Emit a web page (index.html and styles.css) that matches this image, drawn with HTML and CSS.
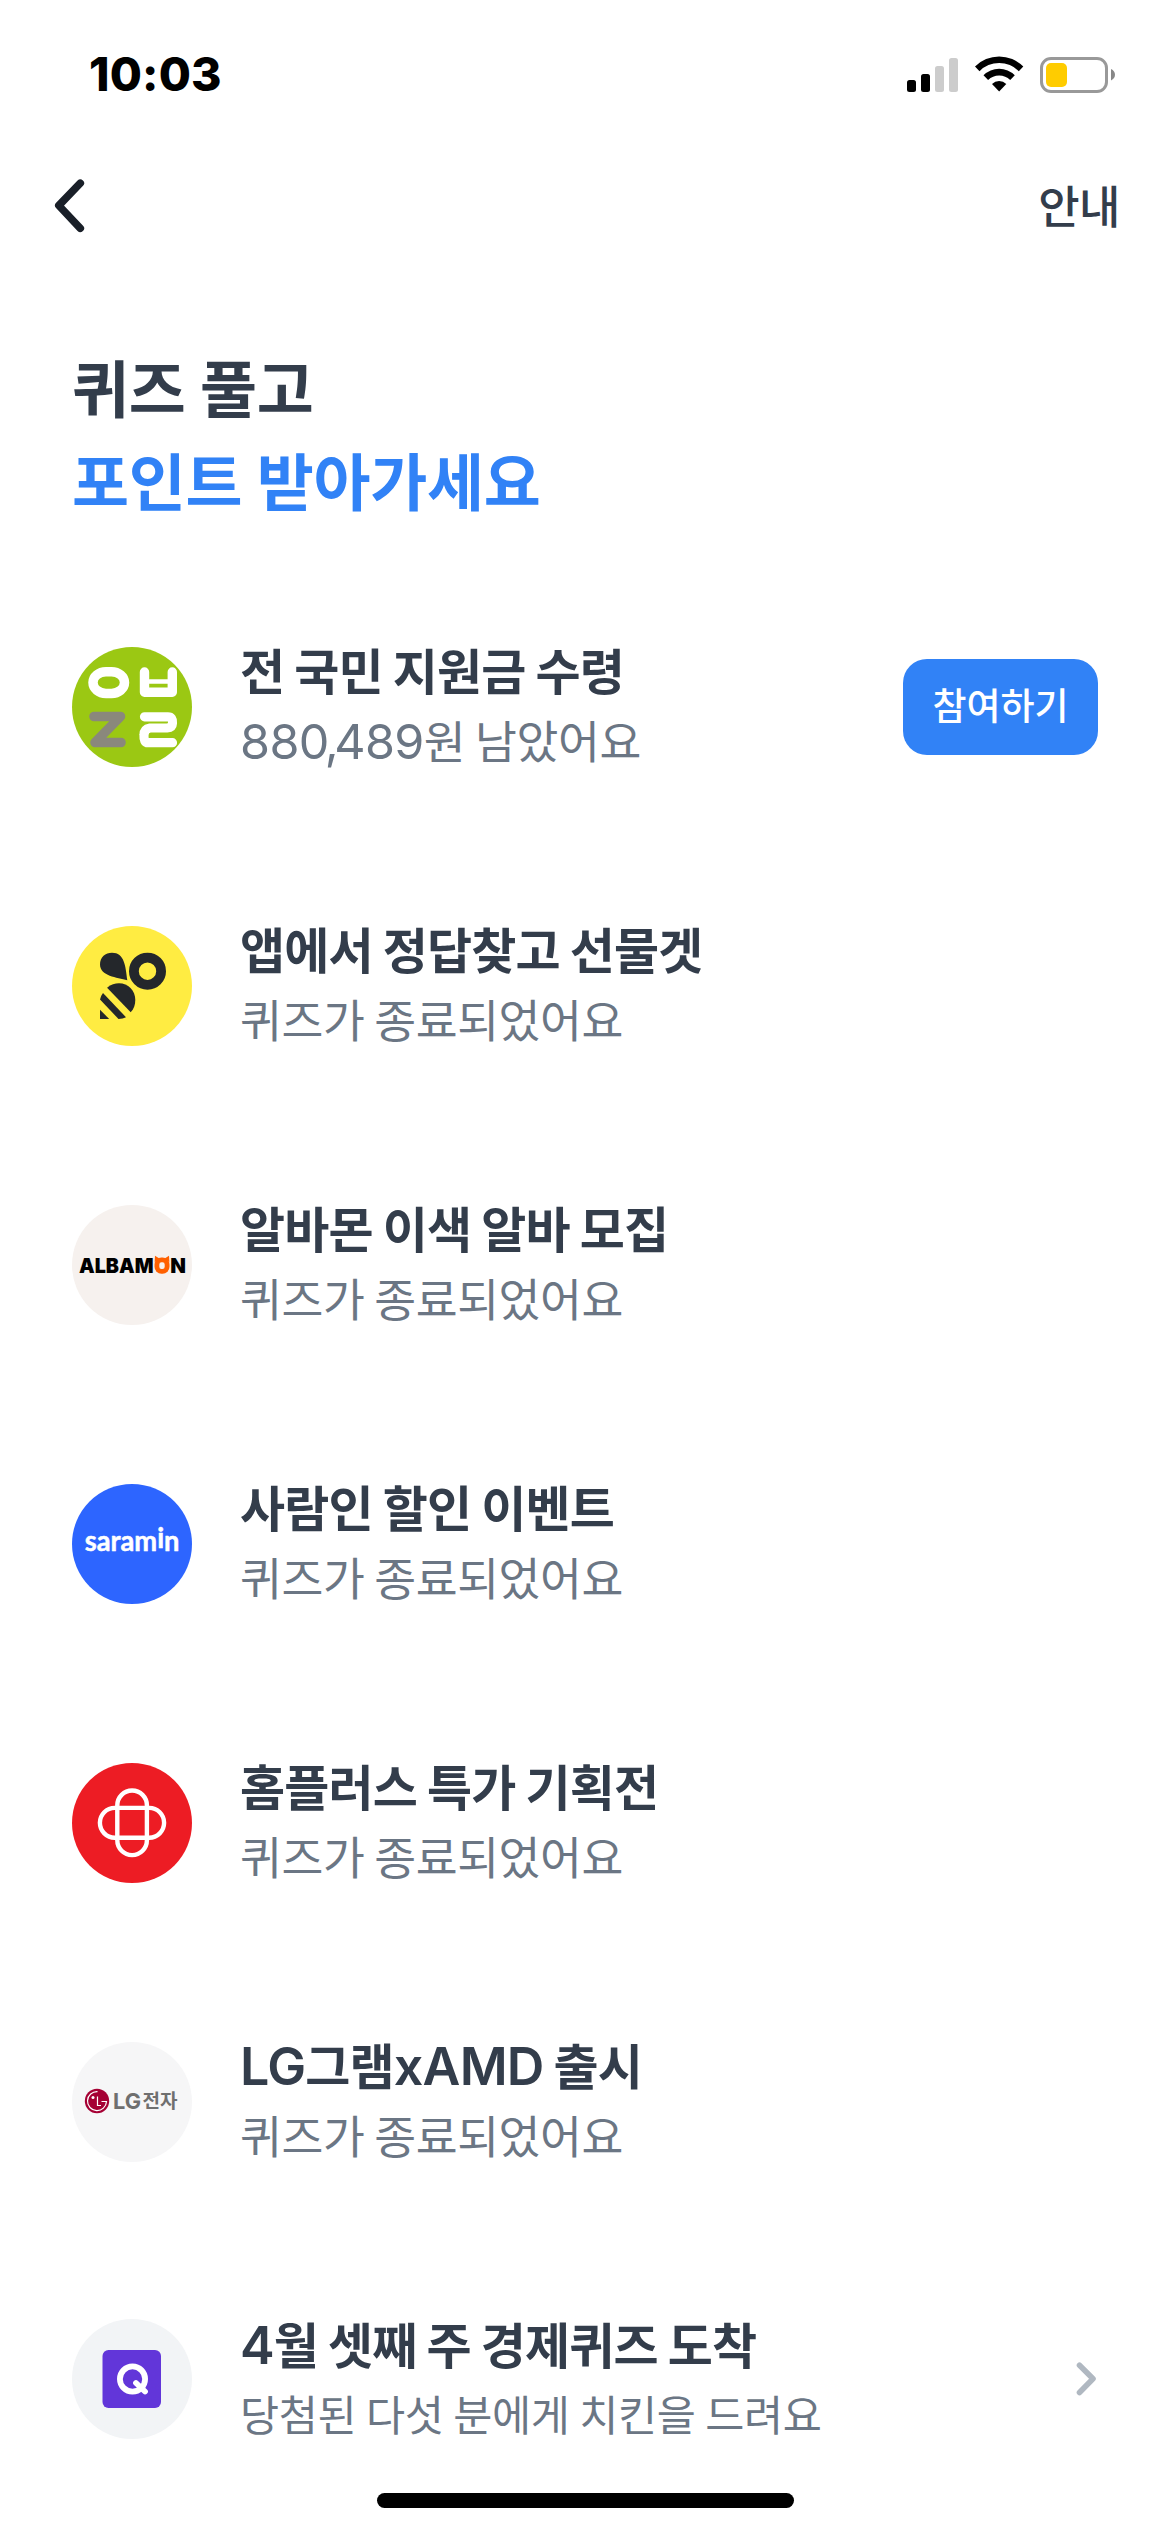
FILE: index.html
```html
<!DOCTYPE html>
<html lang="ko">
<head>
<meta charset="utf-8">
<title>퀴즈 풀고 포인트 받아가세요</title>
<link rel="stylesheet" href="styles.css">
</head>
<body>
<div class="screen">
  <div class="status">
    <span class="clock">10:03</span>
    <svg class="status-icons" width="210" height="40" viewBox="0 0 210 40">
      <rect x="2" y="26" width="9" height="12" rx="2.5"/>
      <rect x="16" y="20" width="9" height="18" rx="2.5"/>
      <rect x="30" y="12" width="9" height="26" rx="2.5" fill="#ccc"/>
      <rect x="44" y="4" width="9" height="34" rx="2.5" fill="#ccc"/>
      <path d="M70 12.5A34 34 0 0 1 118.300 12.500L113.800 17.200A27.500 27.500 0 0 0 74.500 17.200Z"/>
      <path d="M78.500 21.300A22 22 0 0 1 109.800 21.300L105.200 26A15.600 15.600 0 0 0 83.100 26Z"/>
      <path d="M87 29.900A10.200 10.200 0 0 1 101.300 29.900L94.150 37.600Z"/>
      <rect x="136.500" y="4.500" width="65" height="33" rx="9.500" fill="none" stroke="#999" stroke-width="3"/>
      <rect x="141" y="9" width="21" height="24" rx="5" fill="#fc0"/>
      <path d="M206 15Q210 17 210 20.700T206 26.400Z" fill="#888"/>
    </svg>
  </div>

  <header class="nav">
    <svg class="back" width="32" height="56" viewBox="0 0 32 56"><path d="M26.300 5.200L4.800 27.500L26.300 50.300" fill="none" stroke="#191f28" stroke-width="7.600" stroke-linecap="round" stroke-linejoin="round"/></svg>
    <span class="guide">안내</span>
  </header>

  <h1 class="headline">퀴즈 풀고<br><span class="accent">포인트 받아가세요</span></h1>

  <ul class="list">
    <li class="row">
      <svg class="logo" viewBox="0 0 120 120">
        <circle cx="60" cy="60" r="60" fill="#9bc813"/>
        <g fill="none" stroke="#fff" stroke-linecap="round" stroke-linejoin="round">
          <rect x="21" y="24.800" width="31.500" height="21.600" rx="13" ry="10.800" stroke-width="9.500"/>
          <path d="M72.500 25V45.300H100.300V25" stroke-width="9.400"/>
          <path d="M74 34.500H99" stroke-width="4.500"/>
          <path d="M72.500 69.800H96Q101 69.800 100.500 76Q100.300 80.500 95 81H78Q72 82 72 88Q71.500 95.700 76 95.700H100.500" stroke-width="9.200"/>
        </g>
        <path d="M22 69.500H48.500L23 95.500H49" fill="none" stroke="#8a887c" stroke-width="9.600" stroke-linecap="round" stroke-linejoin="round"/>
      </svg>
      <div class="texts">
        <p class="title">전 국민 지원금 수령</p>
        <p class="desc"><span class="num">880<span class="comma">,</span>489</span>원 남았어요</p>
      </div>
      <button class="join">참여하기</button>
    </li>

    <li class="row">
      <svg class="logo" viewBox="0 0 120 120">
        <circle cx="60" cy="60" r="60" fill="#ffec42"/>
        <g fill="#24272b">
          <path d="M55.300 54.300C45 51.500 28 50 28 38.500C28 31 33.500 26.700 40 26.700C52.500 26.700 53.500 40 55.300 54.300Z"/>
          <circle cx="75.500" cy="45.200" r="13.600" fill="none" stroke="#24272b" stroke-width="9.800"/>
          <path d="M35.100 61.700C39 58.500 43 57.300 47 57.300C56 57.300 63.300 64.500 63.300 74C63.300 79 61.800 83 58.700 86.300Z"/>
          <path d="M31 67L54 91.200Q51 92.800 46.500 93L28 73.500Q28.800 69.800 31 67Z"/>
          <path d="M28 83.700L37.200 93H28Z"/>
        </g>
      </svg>
      <div class="texts">
        <p class="title">앱에서 정답찾고 선물겟</p>
        <p class="desc">퀴즈가 종료되었어요</p>
      </div>
    </li>

    <li class="row">
      <svg class="logo" viewBox="0 0 120 120">
        <circle cx="60" cy="60" r="60" fill="#f6f1ee"/>
        <g class="albamon">
          <text x="7" y="68" textLength="74.500" lengthAdjust="spacingAndGlyphs">ALBAM</text>
          <text x="98.300" y="68" textLength="15.700" lengthAdjust="spacingAndGlyphs">N</text>
        </g>
        <rect x="84.900" y="54.800" width="10.200" height="11.600" rx="4.600" fill="none" stroke="#ff6000" stroke-width="4.800"/>
        <path d="M82.600 57L83 50.800L87 53.200H93L97 50.800L97.400 57L93.500 54.500H86.500Z" fill="#ff6000"/>
      </svg>
      <div class="texts">
        <p class="title">알바몬 이색 알바 모집</p>
        <p class="desc">퀴즈가 종료되었어요</p>
      </div>
    </li>

    <li class="row">
      <svg class="logo" viewBox="0 0 120 120">
        <circle cx="60" cy="60" r="60" fill="#2d65ff"/>
        <text class="saramin" x="12.700" y="66.600" textLength="94.800" lengthAdjust="spacingAndGlyphs">saram<tspan dy="-3">i</tspan><tspan dy="3">n</tspan></text>
      </svg>
      <div class="texts">
        <p class="title">사람인 할인 이벤트</p>
        <p class="desc">퀴즈가 종료되었어요</p>
      </div>
    </li>

    <li class="row">
      <svg class="logo" viewBox="0 0 120 120">
        <circle cx="60" cy="60" r="60" fill="#ed1c24"/>
        <g fill="none" stroke="#fff" stroke-width="4.400">
          <rect x="27.900" y="44.900" width="64.200" height="29.800" rx="14.900"/>
          <rect x="45.300" y="27.500" width="29.600" height="64.600" rx="14.800"/>
        </g>
      </svg>
      <div class="texts">
        <p class="title">홈플러스 특가 기획전</p>
        <p class="desc">퀴즈가 종료되었어요</p>
      </div>
    </li>

    <li class="row">
      <svg class="logo" viewBox="0 0 120 120">
        <circle cx="60" cy="60" r="60" fill="#f6f6f7"/>
        <circle cx="25" cy="59" r="12.200" fill="#a50034"/>
        <g fill="none" stroke="#fff" stroke-width="1.200">
          <path d="M25.500 49.600A9.500 9.500 0 1 0 34.500 59.500H29.500"/>
          <path d="M25.500 54.500V63.500H29"/>
        </g>
        <circle cx="21" cy="55.500" r="1.500" fill="#fff"/>
        <g class="lg">
          <text x="41" y="66.800" textLength="28" lengthAdjust="spacingAndGlyphs" class="lg-latin">LG</text>
          <text x="70.500" y="65.600" textLength="35" lengthAdjust="spacingAndGlyphs" class="lg-ko">전자</text>
        </g>
      </svg>
      <div class="texts">
        <p class="title"><span class="num">LG</span>그램<span class="num">xAMD</span> 출시</p>
        <p class="desc">퀴즈가 종료되었어요</p>
      </div>
    </li>

    <li class="row last">
      <svg class="logo" viewBox="0 0 120 120">
        <circle cx="60" cy="60" r="60" fill="#f2f4f6"/>
        <rect x="30.500" y="31" width="58.500" height="58" rx="6" fill="#6236d9"/>
        <g fill="none" stroke="#fff" stroke-width="5.800" stroke-linecap="round">
          <circle cx="60.500" cy="60" r="12.600"/>
          <path d="M64 64L73 72.500"/>
        </g>
      </svg>
      <div class="texts">
        <p class="title"><span class="num">4</span>월 셋째 주 경제퀴즈 도착</p>
        <p class="desc small">당첨된 다섯 분에게 치킨을 드려요</p>
      </div>
      <svg class="chevron" width="24" height="36" viewBox="0 0 24 36"><path d="M5.500 4.200L19 17.800L5.500 31.500" fill="none" stroke="#b0b8c1" stroke-width="5.600" stroke-linecap="round" stroke-linejoin="round"/></svg>
    </li>
  </ul>
  <div class="home-bar"></div>
</div>
</body>
</html>
```
FILE: styles.css
```css
* {
  box-sizing: border-box;
  margin: 0;
  padding: 0;
}

body {
  background: #fff;
  color: #333d4b;
  font-family: "Noto Sans CJK KR", sans-serif;
}

.screen {
  position: relative;
  display: flex;
  flex-direction: column;
  width: 1170px;
  height: 2532px;
  overflow: hidden;
}

.status {
  display: flex;
  justify-content: space-between;
  align-items: center;
  height: 150px;
  padding: 0 55px 2px 89px;
}

.clock {
  color: #000;
  font: 800 46.500px/60px "Inter", sans-serif;
  letter-spacing: 0.200px;
}

.nav {
  display: flex;
  justify-content: space-between;
  align-items: center;
  height: 112px;
  padding: 0 50px 0 54px;
}

.guide {
  margin-top: -3px;
  font-size: 45px;
  font-weight: 500;
  line-height: 60px;
  letter-spacing: -0.500px;
}

.headline {
  height: 305px;
  padding: 78px 0 0 72px;
  font-size: 62px;
  font-weight: 600;
  line-height: 93px;
  letter-spacing: -0.300px;
  word-spacing: -2.500px;
}

.accent {
  color: #3182f6;
}

.list {
  list-style: none;
}

.row {
  display: flex;
  align-items: center;
  height: 279px;
  padding: 0 72px;
}

.row.last {
  height: 276px;
}

.logo {
  flex: none;
  width: 120px;
  height: 120px;
}

.texts {
  flex: 1;
  margin: -6px 0 0 48px;
  white-space: nowrap;
}

.last .texts {
  margin-top: -2px;
}

.title {
  font-size: 49px;
  font-weight: 600;
  line-height: 70px;
  letter-spacing: -0.800px;
  word-spacing: -3px;
}

.desc {
  color: #6b7684;
  font-size: 45.500px;
  font-weight: 400;
  line-height: 70px;
  letter-spacing: -0.400px;
  word-spacing: -2.500px;
}

.desc.small {
  font-size: 42.500px;
  letter-spacing: -0.300px;
  word-spacing: -2px;
}

.num {
  font-family: "Inter", sans-serif;
  font-size: 52px;
  line-height: 0;
}

.desc .num {
  font-size: 48.500px;
  font-weight: 400;
  letter-spacing: -0.600px;
}

.comma {
  margin: 0 -4px;
}

.join {
  width: 195px;
  height: 96px;
  padding-bottom: 6px;
  border: 0;
  border-radius: 24px;
  background: #3182f6;
  color: #fff;
  font: 500 37px/90px "Noto Sans CJK KR", sans-serif;
}

.albamon {
  font: 900 20.200px "Inter", sans-serif;
}

.saramin {
  fill: #fff;
  stroke: #fff;
  stroke-width: 0.500px;
  stroke-linejoin: round;
  font: 700 28px "Lato", sans-serif;
}

.lg {
  fill: #6f6f6f;
}

.lg-latin {
  font: 700 22px "Inter", sans-serif;
}

.lg-ko {
  font: 700 19px "Noto Sans CJK KR", sans-serif;
}

.home-bar {
  position: absolute;
  left: 377px;
  bottom: 24px;
  width: 417px;
  height: 15px;
  border-radius: 8px;
  background: #000;
}
```
